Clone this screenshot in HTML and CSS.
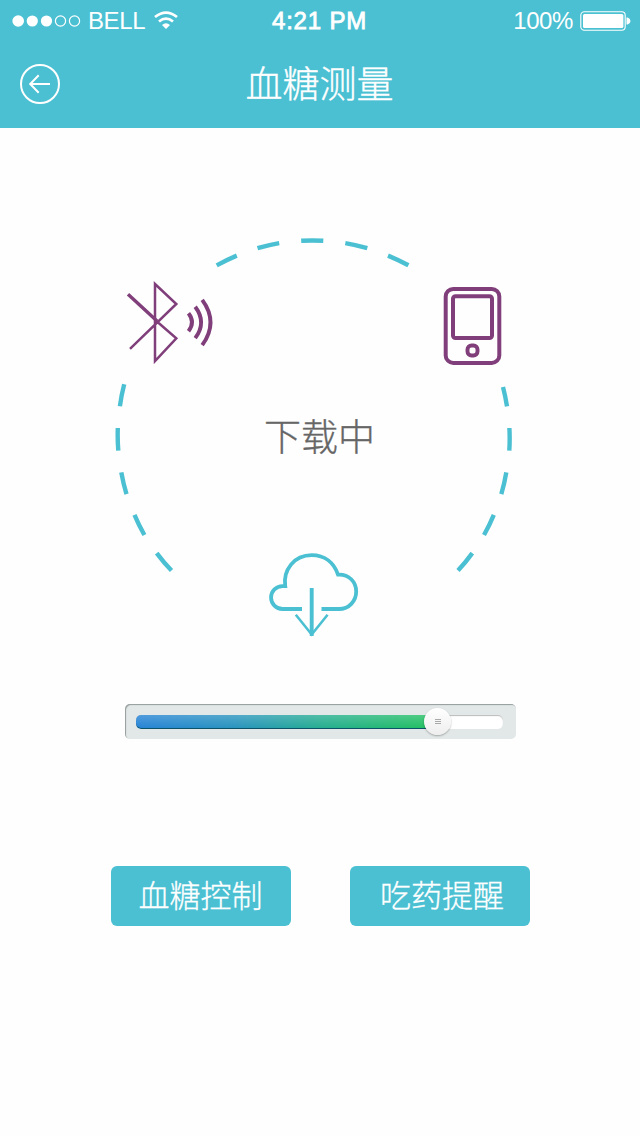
FILE: index.html
```html
<!DOCTYPE html>
<html lang="zh-CN">
<head>
<meta charset="utf-8">
<title>血糖测量</title>
<link rel="stylesheet" href="styles.css">
</head>
<body>
<div class="screen">
  <header class="header">
    <div class="status">
      <div class="status-left">
        <svg class="signal" width="70" height="14" viewBox="0 0 70 14">
          <g fill="#fff"><circle cx="6.2" cy="7" r="5.800"/><circle cx="20.3" cy="7" r="5.600"/><circle cx="34.5" cy="7" r="5.600"/></g>
          <g fill="none" stroke="#fff" stroke-width="1.2"><circle cx="48.500" cy="7" r="5.100"/><circle cx="62.500" cy="7" r="5.100"/></g>
        </svg>
        <span class="carrier">BELL</span>
        <svg class="wifi" width="24" height="19" viewBox="0 0 24 19">
          <g fill="none" stroke="#fff" stroke-width="2.800"><path d="M1 6Q12 -2.800 23 6"/><path d="M5 10.500Q12 4.800 19 10.500"/></g>
          <path d="M8 14Q12 10.500 16 14L12 18Z" fill="#fff"/>
        </svg>
      </div>
      <span class="clock">4:21 PM</span>
      <div class="status-right">
        <span class="percent">100%</span>
        <svg class="battery" width="51" height="20" viewBox="0 0 51 20">
          <rect x=".8" y=".8" width="44.400" height="18.400" rx="3.500" fill="none" stroke="#fff" stroke-width="1.100"/>
          <rect x="3" y="3" width="40.400" height="14" rx="1.500" fill="#fff"/>
          <path d="M46.500 6.500h1.200q2.800 1 2.800 3.500t-2.800 3.500H46.500Z" fill="#fff"/>
        </svg>
      </div>
    </div>
    <div class="navbar">
      <svg class="back" width="40" height="40" viewBox="0 0 40 40" fill="none" stroke="#fff" stroke-width="2">
        <circle cx="20" cy="20" r="19"/><path d="M30 20H10.500M18.700 11.300L10.200 20L18.700 28.700"/>
      </svg>
      <h1 class="title">血糖测量</h1>
    </div>
  </header>

  <main class="content">
    <section class="sync">
      <svg class="sync-art" width="410" height="410" viewBox="110 235 410 410" fill="none">
        <g stroke="#4bc0d2" stroke-width="4.400">
          <path d="M216.700 265.300A197 197 0 0 1 236.800 255.600M257.500 248.200A197 197 0 0 1 279.200 243.100M301.200 240.800A197 197 0 0 1 323.300 240.800M345.300 243.100A197 197 0 0 1 367.300 248.200M388 255.600A197 197 0 0 1 408.400 265.300"/>
          <path d="M124.200 384.300A197 197 0 0 0 119.900 406.200M117.800 428A197 197 0 0 0 118.300 450.600M121.300 472.300A197 197 0 0 0 126.500 494.200M134.500 514.800A197 197 0 0 0 144.400 535M156.700 553.100A197 197 0 0 0 171.500 570.600"/>
          <path d="M503 387A197 197 0 0 1 507 406.300M509.400 428A197 197 0 0 1 509.300 450.600M506.300 472.300A197 197 0 0 1 501.300 494.200M493.800 514.800A197 197 0 0 1 484 535M472.300 553.100A197 197 0 0 1 458 570.600"/>
        </g>
        <g stroke="#803f7b">
          <path stroke-width="3.400" d="M128 294.200L157 321"/>
          <path stroke-width="2.500" d="M155.200 320L176.300 338.400L155 361V284L176.300 304L130 348.800"/>
          <path stroke-width="3.900" d="M188.500 313.300Q195.500 322.300 188.500 331.200M195.200 306.700Q207 322.300 195.200 338.200M202.200 299.800Q218.800 322.300 202.200 345.200"/>
          <rect x="445.700" y="288.900" width="53.600" height="74" rx="7.500" stroke-width="4"/>
          <rect x="453" y="296.300" width="39" height="41.700" rx="2.500" stroke-width="4"/>
          <rect x="467.500" y="345.500" width="10" height="10" rx="4" stroke-width="3.900"/>
        </g>
        <g stroke="#4bc0d2">
          <path stroke-width="3.800" d="M302 609H282.500A11.450 11.450 0 0 1 282.500 586.100H285.200C283 570 294 555.200 311.700 555.200C325 555.200 334 563 338 574.600C349 574 356.200 582 356.200 591.500C356.200 601 349 609 339 609H321.500"/>
          <path stroke-width="3.900" d="M311.700 588V636"/>
          <path stroke-width="2.600" d="M295.800 614.700L311.700 634.500L327.600 614.700"/>
        </g>
      </svg>
      <p class="sync-label">下载中</p>
    </section>

    <div class="slider">
      <div class="track"><div class="fill"></div></div>
      <div class="knob"><i></i><i></i><i></i></div>
    </div>

    <div class="actions">
      <button class="action">血糖控制</button>
      <button class="action action-reminder">吃药提醒</button>
    </div>
  </main>
</div>
</body>
</html>
```
FILE: styles.css
```css
* { box-sizing: border-box; }
body { margin: 0; background: #fefefe; font-family: "Liberation Sans", "Noto Sans CJK SC", sans-serif; }
svg { display: block; }
.screen { width: 640px; height: 1136px; overflow: hidden; display: flex; flex-direction: column; }
.header { height: 128px; background: #4bc0d2; color: #fff; flex: none; }
.status { height: 40px; padding: 0 9px 0 12px; display: grid; grid-template-columns: 1fr auto 1fr; align-items: center; font-size: 24px; line-height: 40px; }
.status-left, .status-right { display: flex; align-items: center; }
.status-right { justify-content: flex-end; gap: 7px; }
.carrier { width: 60px; margin-left: 6px; font-size: 24px; letter-spacing: -.4px; padding-top: 1px; }
.wifi { margin-left: 6px; }
.clock { margin-right: 4px; font-weight: 400; -webkit-text-stroke: .8px #fff; letter-spacing: .8px; font-size: 24px; padding-top: 1px; }
.percent { padding-top: 1px; letter-spacing: -.4px; }
.navbar { height: 88px; padding: 0 20px; display: grid; grid-template-columns: 40px 1fr 40px; align-items: center; }
.title { margin: 0 1px 4px 0; text-align: center; font: 300 37px/60px "Noto Sans CJK SC", sans-serif; -webkit-text-stroke: .35px currentColor; }
.content { display: flex; flex-direction: column; }
.sync { margin: 107px 0 0 110px; width: 410px; height: 410px; display: grid; }
.sync-art, .sync-label { grid-area: 1 / 1; }
.sync-label { margin: 170px 0 0 9px; height: 60px; text-align: center; color: #666; font: 300 37px/60px "Noto Sans CJK SC", sans-serif; -webkit-text-stroke: .35px currentColor; }
.slider { margin: 59px 0 0 125px; width: 391px; height: 35px; padding: 11px 13px 10px 11px; position: relative; background: #e2e8e7; border-radius: 5px; box-shadow: inset 1px 1px 1px #949c9b; }
.track { height: 14px; border-radius: 5px; background: #fff; box-shadow: inset 0 1px 1px #bbb; }
.fill { width: 302px; height: 14px; border-radius: 5px 0 0 5px; background: linear-gradient(rgba(255,255,255,.2), rgba(255,255,255,0)), linear-gradient(90deg, #2482d5, #2693bd 33%, #23ad8e 62%, #20c15c); box-shadow: inset 0 -1px 0 #0d5368; }
.knob { position: absolute; left: 299px; top: 4px; width: 27px; height: 27px; border-radius: 50%; background: linear-gradient(#fff, #eee); box-shadow: 0 1px 2px rgba(0,0,0,.3); display: flex; flex-direction: column; align-items: center; justify-content: center; gap: 1px; }
.knob i { width: 6px; height: 1px; background: #aaa; }
.actions { margin: 127px 0 0 111px; display: flex; gap: 59px; }
.action { width: 180px; height: 60px; padding: 0 1px 4px 0; border: 0; border-radius: 6px; background: #4bc0d2; color: #fff; font: 300 31px/56px "Noto Sans CJK SC", sans-serif; white-space: nowrap; -webkit-text-stroke: .3px currentColor; }
.action-reminder { padding: 0 0 4px 4px; }
```
